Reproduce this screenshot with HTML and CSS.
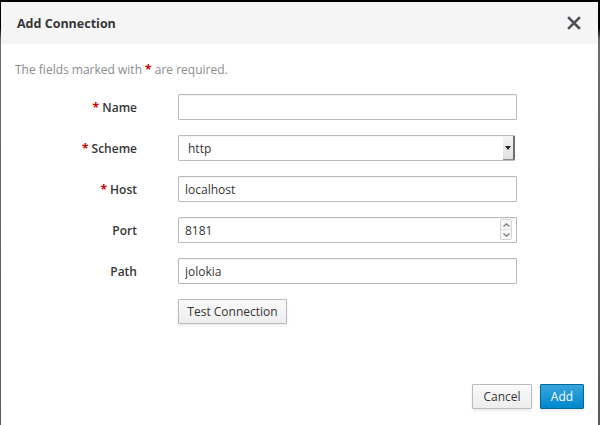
FILE: index.html
```html
<!DOCTYPE html>
<html>
<head>
<meta charset="utf-8">
<link rel="stylesheet" href="styles.css">
</head>
<body>
<div class="modal">
  <div class="modal-header">
    <h4 class="modal-title">Add Connection</h4>
    <span class="close">
      <svg width="14" height="14" viewBox="0 0 14 14"><path d="M2 2 L12 12 M12 2 L2 12" stroke="#4d5258" stroke-width="2.6" stroke-linecap="square"/></svg>
    </span>
  </div>
  <div class="modal-body">
    <p class="hint">The fields marked with <span class="req">*</span> are required.</p>
    <form class="form">
      <label class="label"><span class="req">*</span> Name</label>
      <input class="control" type="text" value="">
      <label class="label"><span class="req">*</span> Scheme</label>
      <div class="select-wrap">
        <select class="control select"><option>http</option><option>https</option></select>
        <span class="select-btn"><svg width="6" height="4" viewBox="0 0 6 4"><path d="M0 0 H6 L3 4 Z" fill="#222"/></svg></span>
      </div>
      <label class="label"><span class="req">*</span> Host</label>
      <input class="control" type="text" value="localhost">
      <label class="label">Port</label>
      <div class="spin-wrap">
        <input class="control" type="text" value="8181">
        <span class="spin">
          <span class="spin-b"><svg width="7" height="4" viewBox="0 0 7 4"><path d="M0.5 3.5 L3.5 0.8 L6.5 3.5" fill="none" stroke="#777" stroke-width="1.2"/></svg></span>
          <span class="spin-b"><svg width="7" height="4" viewBox="0 0 7 4"><path d="M0.5 0.5 L3.5 3.2 L6.5 0.5" fill="none" stroke="#777" stroke-width="1.2"/></svg></span>
        </span>
      </div>
      <label class="label">Path</label>
      <input class="control" type="text" value="jolokia">
      <span></span>
      <div><button type="button" class="btn">Test Connection</button></div>
    </form>
  </div>
  <div class="modal-footer">
    <button type="button" class="btn btn-cancel">Cancel</button>
    <button type="button" class="btn btn-primary">Add</button>
  </div>
</div>
</body>
</html>
```
FILE: styles.css
```css
html, body {
  margin: 0;
  padding: 0;
  height: 425px;
  overflow: hidden;
}
body {
  background: linear-gradient(#000 0, #000 28px, #6b6b6b 40px, #5a5a5a 100%);
  font-family: "Open Sans", "Liberation Sans", sans-serif;
  font-size: 12px;
  color: #363636;
}
.modal {
  margin: 2px 2px 0 1px;
  height: 423px;
  background: #fff;
  display: flex;
  flex-direction: column;
}
.modal-header {
  height: 42px;
  flex: none;
  background: #f5f5f5;
  display: flex;
  align-items: center;
  justify-content: space-between;
  padding: 0 17px 0 16px;
}
.modal-title {
  margin: 0;
  font-size: 12.5px;
  font-weight: 700;
  color: #363636;
}
.close {
  display: flex;
  width: 14px;
  height: 14px;
}
.modal-body {
  flex: 1;
  padding: 17px 14px 0 14px;
}
.hint {
  margin: 0 0 16px 0;
  color: #8b8d8f;
  line-height: 17px;
}
.req {
  color: #cc0000;
  font-weight: 700;
}
.form {
  display: grid;
  grid-template-columns: 122px 339px;
  column-gap: 41px;
  row-gap: 15px;
  align-items: center;
}
.label {
  text-align: right;
  font-weight: 600;
  color: #363636;
}
.control {
  box-sizing: border-box;
  width: 339px;
  height: 26px;
  margin: 0;
  border: 1px solid #bababa;
  border-radius: 1px;
  padding: 2px 6px;
  font-family: "Open Sans", "Liberation Sans", sans-serif;
  font-size: 12px;
  color: #363636;
  background: #fff;
  box-shadow: inset 0 1px 1px rgba(3,3,3,0.05);
  outline: none;
}
.select-wrap, .spin-wrap {
  position: relative;
  width: 339px;
  height: 26px;
}
.select {
  appearance: none;
  -webkit-appearance: none;
  width: 337px;
  padding-left: 9px;
}
.select-btn {
  position: absolute;
  right: 2px;
  top: 1px;
  width: 10px;
  height: 23px;
  background: linear-gradient(#f4f4f4, #e0e0e0);
  border-right: 2px solid #6e6e6e;
  border-bottom: 1px solid #8a8a8a;
  display: flex;
  align-items: center;
  justify-content: center;
}
.spin {
  position: absolute;
  right: 5px;
  top: 2px;
  width: 12px;
  height: 21px;
  display: flex;
  flex-direction: column;
  border: 1px solid #d4d4d4;
  border-radius: 2px;
  box-sizing: border-box;
}
.spin-b {
  flex: 1;
  display: flex;
  align-items: center;
  justify-content: center;
  background: #f7f7f7;
}
.spin-b + .spin-b {
  border-top: 1px solid #e2e2e2;
}
.btn {
  box-sizing: border-box;
  height: 25px;
  padding: 0 6px;
  font-family: "Open Sans", "Liberation Sans", sans-serif;
  font-size: 12px;
  font-weight: 400;
  color: #363636;
  background: linear-gradient(#fafafa, #ededed);
  border: 1px solid #bbbbbb;
  border-radius: 1px;
  box-shadow: 0 2px 3px rgba(3,3,3,0.08);
  cursor: pointer;
}
.form .btn {
  width: 109px;
}
.modal-footer {
  flex: none;
  display: flex;
  justify-content: flex-end;
  gap: 8px;
  padding: 0 14px 16px 0;
}
.btn-cancel {
  width: 60px;
}
.btn-primary {
  width: 44px;
  color: #fff;
  background: linear-gradient(#39a5dc, #0088ce);
  border-color: #00659c;
}
```
